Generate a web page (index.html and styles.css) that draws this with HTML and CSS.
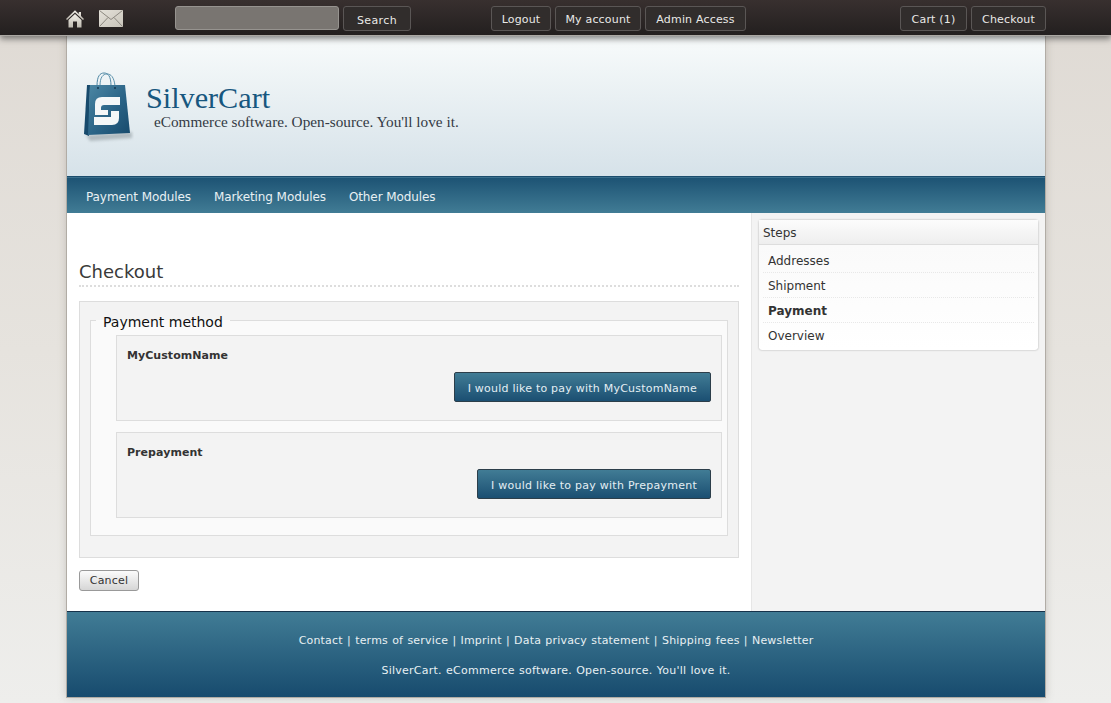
FILE: index.html
```html
<!DOCTYPE html>
<html lang="en">
<head>
<meta charset="utf-8">
<title>SilverCart Checkout</title>
<link rel="stylesheet" href="styles.css">
</head>
<body>
<div class="topbar">
  <div class="topbar-inner">
    <div class="icons">
      <a class="icon-home" href="#"><svg width="18" height="18" viewBox="0 0 18 18"><defs><linearGradient id="hg" x1="0" y1="0" x2="0" y2="1"><stop offset="0" stop-color="#f4f1ea"/><stop offset="1" stop-color="#bdb9af"/></linearGradient></defs><path fill="url(#hg)" d="M9 .3 12.800 4V2H15V6.100L18 9 17 10.100 9 2.600 1 10.100 0 9Z"/><path fill="url(#hg)" d="M9 4 15.500 10V17.500H11V11.500H7V17.500H2.500V10Z"/><path fill="#e6e2da" d="M7.500 7.500H10.500V9.500H7.500Z"/></svg></a>
      <a class="icon-mail" href="#"><svg width="24" height="17" viewBox="0 0 24 17"><defs><linearGradient id="mg" x1="0" y1="0" x2="1" y2="1"><stop offset="0" stop-color="#e4e1d9"/><stop offset="1" stop-color="#c8c4ba"/></linearGradient></defs><rect width="24" height="17" fill="url(#mg)"/><path d="M.5 .5 12 9.500 23.500 .5M.5 16.500 9 7.500M23.500 16.500 15 7.500" fill="none" stroke="#8b877f" stroke-width="1"/></svg></a>
    </div>
    <form class="search">
      <input class="search-input" type="text" aria-label="Search">
      <a class="top-btn top-btn-search" href="#">Search</a>
    </form>
    <div class="top-group account">
      <a class="top-btn btn-logout" href="#">Logout</a>
      <a class="top-btn btn-account" href="#">My account</a>
      <a class="top-btn btn-admin" href="#">Admin Access</a>
    </div>
    <div class="top-group cart">
      <a class="top-btn btn-cart" href="#">Cart (1)</a>
      <a class="top-btn btn-checkout" href="#">Checkout</a>
    </div>
  </div>
</div>

<div class="page">
  <header class="header">
    <svg class="logo" width="52" height="72" viewBox="0 0 52 72">
      <defs>
        <linearGradient id="bag" x1="0" y1="0" x2="1" y2="1"><stop offset="0" stop-color="#4b87a4"/><stop offset=".55" stop-color="#2a6386"/><stop offset="1" stop-color="#174a6c"/></linearGradient>
        <filter id="blur" x="-20%" y="-50%" width="140%" height="200%"><feGaussianBlur stdDeviation="1.500"/></filter>
      </defs>
      <path d="M4 63 50 60 50 66 8 69Z" fill="#8a949a" opacity=".55" filter="url(#blur)"/>
      <path d="M15 14C15 4 18 1 22 1S29 4 29 14" fill="none" stroke="#4c86a4" stroke-width="1"/>
      <path d="M18 14C18 5 21 2 25 2S32 5 33 14" fill="none" stroke="#5d93ad" stroke-width="1"/>
      <path d="M5 13 2 62 7 64 8 13Z" fill="#174a6c"/>
      <path d="M8 13H43L48 61 6 63Z" fill="url(#bag)"/>
      <circle cx="16" cy="16" r="1" fill="#12364f"/><circle cx="33" cy="16" r="1" fill="#12364f"/>
      <path d="M38 25H20Q13 25 13 32V43H26V38H19V36Q19 33 22 33H38Z" fill="#f4f7f8"/>
      <path d="M37 39H29V45H12V53H30Q37 53 37 46Z" fill="#f4f7f8"/>
    </svg>
    <div class="brand">
      <div class="brand-name">SilverCart</div>
      <div class="brand-tag">eCommerce software. Open-source. You'll love it.</div>
    </div>
  </header>

  <nav class="mainnav">
    <a href="#">Payment Modules</a>
    <a href="#">Marketing Modules</a>
    <a href="#">Other Modules</a>
  </nav>

  <div class="columns">
    <main class="content">
      <h1 class="page-title">Checkout</h1>
      <div class="panel">
        <fieldset class="methods">
          <legend>Payment method</legend>
          <div class="method">
            <h2>MyCustomName</h2>
            <div class="method-action"><a class="pay-btn" href="#">I would like to pay with MyCustomName</a></div>
          </div>
          <div class="method">
            <h2>Prepayment</h2>
            <div class="method-action"><a class="pay-btn pay-btn-short" href="#">I would like to pay with Prepayment</a></div>
          </div>
        </fieldset>
      </div>
      <a class="cancel-btn" href="#">Cancel</a>
    </main>
    <aside class="sidebar">
      <section class="card">
        <h3 class="card-head">Steps</h3>
        <ul class="steps">
          <li>Addresses</li>
          <li>Shipment</li>
          <li class="current">Payment</li>
          <li>Overview</li>
        </ul>
      </section>
    </aside>
  </div>

  <footer class="footer">
    <p><a href="#">Contact</a> | <a href="#">terms of service</a> | <a href="#">Imprint</a> | <a href="#">Data privacy statement</a> | <a href="#">Shipping fees</a> | <a href="#">Newsletter</a></p>
    <p class="footer-tag">SilverCart. eCommerce software. Open-source. You'll love it.</p>
  </footer>
</div>
</body>
</html>
```

FILE: styles.css
```css
* { box-sizing: border-box; }
html, body { margin: 0; padding: 0; height: 100%; }
body {
  background: linear-gradient(#dfdad4 0, #e6e3de 50%, #eeeeec 100%);
  font-family: "DejaVu Sans", sans-serif;
  font-size: 12px;
  color: #333;
  overflow: hidden;
}
a { color: inherit; text-decoration: none; }

.topbar {
  position: relative;
  z-index: 2;
  height: 36px;
  background: linear-gradient(#38302f, #231f1f);
  border-bottom: 1px solid #aaa7a2;
  box-shadow: 0 3px 6px rgba(40, 40, 40, .55);
}
.topbar-inner {
  width: 980px;
  margin-left: 66px;
  display: flex;
  align-items: flex-start;
  padding-top: 6px;
}
.icons { width: 109px; display: flex; gap: 15px; padding-top: 4px; }
.icons a { display: block; height: 18px; }
.icons svg { display: block; }
.search { display: flex; gap: 4px; width: 316px; margin: 0; }
.search-input {
  width: 164px;
  height: 24px;
  background: #797571;
  border: 1px solid #96938f;
  border-radius: 3px;
  padding: 0;
}
.top-group { display: flex; gap: 4px; }
.account { width: 409px; }
.top-btn {
  display: block;
  height: 25px;
  line-height: 25px;
  text-align: center;
  font-size: 11px;
  letter-spacing: .18px;
  white-space: nowrap;
  color: #e9e9e7;
  background: #312d2c;
  border: 1px solid #5a5655;
  border-radius: 3px;
}
.top-btn-search { width: 68px; line-height: 27px; letter-spacing: .4px; }
.btn-logout { width: 60px; }
.btn-account { width: 86px; }
.btn-admin { width: 101px; }
.btn-cart { width: 67px; }
.btn-checkout { width: 75px; }

.page {
  width: 980px;
  margin-left: 66px;
  border: 1px solid #b1aca5;
  border-top: 0;
  box-shadow: 0 0 8px rgba(120, 115, 105, .3);
}

.header {
  height: 141px;
  background: linear-gradient(#f8fbfb 0, #d6e2e9 100%);
  border-bottom: 1px solid #1a4c6d;
  display: flex;
  padding: 36px 0 0 15px;
}
.logo { display: block; }
.brand { margin-left: 12px; padding-top: 9px; }
.brand-name {
  font-family: "Liberation Serif", serif;
  font-size: 30.2px;
  line-height: 34px;
  color: #17577f;
}
.brand-tag {
  font-family: "Liberation Serif", serif;
  font-size: 15.25px;
  line-height: 13px;
  padding-left: 8px;
  color: #333a44;
}

.mainnav {
  height: 36px;
  background: linear-gradient(#1c5273, #417c95);
  box-shadow: inset 0 1px 0 #3a6f8c;
  display: flex;
  gap: 23px;
  padding-left: 19px;
  line-height: 40px;
  letter-spacing: -.09px;
  color: #e8f0f3;
}

.columns { display: flex; height: 398px; }
.content {
  width: 684px;
  background: #fff;
  padding: 46px 12px 0;
}
.page-title {
  margin: 0;
  font-size: 18px;
  font-weight: normal;
  line-height: 25px;
  height: 28px;
  border-bottom: 2px dotted #ddd;
  color: #3a3a3a;
}
.panel {
  margin-top: 14px;
  height: 257px;
  background: #f3f3f3;
  border: 1px solid #ddd;
  padding: 8px 10px 0;
}
.methods {
  margin: 0;
  height: 226px;
  background: #fafafa;
  border: 1px solid #ddd;
  padding: 4px 5px 0 25px;
  min-width: 0;
}
.methods legend {
  margin-left: -20px;
  padding: 4px 7px 0;
  font-size: 14px;
  line-height: 17px;
  color: #111;
}
.method {
  height: 86px;
  background: #f3f3f3;
  border: 1px solid #ddd;
  padding: 13px 10px 0;
  margin-bottom: 11px;
}
.method h2 {
  margin: 0;
  font-size: 11px;
  line-height: 13px;
  letter-spacing: .05px;
  color: #333;
}
.method-action { display: flex; justify-content: flex-end; margin-top: 10px; }
.pay-btn {
  display: block;
  height: 30px;
  line-height: 31px;
  padding: 0 13px;
  font-size: 11px;
  letter-spacing: .225px;
  color: #e3eef3;
  background: linear-gradient(#417c95, #1b4f72);
  border: 1px solid #2c3e4a;
  border-radius: 2px;
}
.pay-btn-short { letter-spacing: .26px; }
.cancel-btn {
  display: block;
  width: 60px;
  height: 21px;
  margin-top: 12px;
  line-height: 19px;
  text-align: center;
  font-size: 11px;
  letter-spacing: .2px;
  color: #333;
  background: linear-gradient(#fbfbfb, #d6d6d6);
  border: 1px solid #999;
  border-radius: 3px;
}

.sidebar {
  flex: 1;
  background: #f3f3f3;
  border-left: 1px solid #e6e6e6;
  padding: 7px 7px 0;
}
.card {
  background: #fff;
  border-radius: 3px;
  box-shadow: 0 0 2px rgba(0, 0, 0, .35);
  height: 130px;
}
.card-head {
  margin: 0;
  height: 25px;
  padding: 2px 0 0 4px;
  font-size: 12px;
  font-weight: normal;
  line-height: 23px;
  color: #333;
  background: linear-gradient(#fcfcfc, #eee);
  border-bottom: 1px solid #ddd;
}
.steps {
  list-style: none;
  margin: 0;
  padding: 3px 4px 0;
  background: linear-gradient(#fafafa, #fff);
}
.steps li {
  height: 25px;
  line-height: 26px;
  padding-left: 5px;
  border-bottom: 1px dotted #e8e8e8;
}
.steps li:last-child { border-bottom: 0; }
.steps .current { font-weight: bold; }

.footer {
  height: 86px;
  background: linear-gradient(#417c95, #174b6e);
  border-top: 1px solid #16324a;
  text-align: center;
  font-size: 11px;
  letter-spacing: .19px;
  word-spacing: .55px;
  color: #e8f0f3;
  padding-top: 22px;
}
.footer p { margin: 0 0 16px; line-height: 14px; }
.footer .footer-tag { letter-spacing: .24px; }
```
